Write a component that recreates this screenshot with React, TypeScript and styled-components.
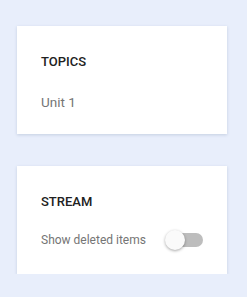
import { useState } from "react";
import styled, { createGlobalStyle } from "styled-components";

const GlobalStyle = createGlobalStyle`
  html, body {
    margin: 0;
    padding: 0;
    background: #e8eefb;
    font-family: Roboto, "Liberation Sans", sans-serif;
  }
`;

export default function App() {
  const [showDeleted, setShowDeleted] = useState(false);

  return (
    <>
      <GlobalStyle />
      <Page>
        <Card>
          <Heading>TOPICS</Heading>
          <Body>Unit 1</Body>
        </Card>
        <Card>
          <Heading>STREAM</Heading>
          <Row>
            <Label>Show deleted items</Label>
            <Switch
              $on={showDeleted}
              onClick={() => setShowDeleted(!showDeleted)}
              aria-pressed={showDeleted}
            >
              <Thumb $on={showDeleted} />
            </Switch>
          </Row>
        </Card>
      </Page>
    </>
  );
}

const Page = styled.div`
  display: flex;
  flex-direction: column;
  gap: 32px;
  padding: 26px 20px 0 17px;
`;

const Card = styled.section`
  width: 210px;
  height: 108px;
  box-sizing: border-box;
  padding: 28px 24px 0;
  background: #fff;
  box-shadow: 0 1px 3px rgba(60, 80, 120, 0.2);
  display: flex;
  flex-direction: column;
`;

const Heading = styled.h2`
  margin: 0;
  font-size: 13px;
  font-weight: 500;
  color: #212121;
`;

const Body = styled.div`
  margin-top: 25px;
  font-size: 13.5px;
  color: #757575;
`;

const Row = styled.div`
  margin-top: 21px;
  height: 20px;
  display: flex;
  align-items: center;
  justify-content: space-between;
`;

const Label = styled.span`
  font-size: 12px;
  color: #757575;
`;

const Switch = styled.button<{ $on: boolean }>`
  position: relative;
  width: 38px;
  height: 20px;
  padding: 0;
  border: none;
  background: transparent;
  cursor: pointer;

  &::before {
    content: "";
    position: absolute;
    left: 4px;
    right: 0;
    top: 3px;
    height: 14px;
    border-radius: 7px;
    background: ${(p) => (p.$on ? "#9fb8ef" : "#bdbdbd")};
  }
`;

const Thumb = styled.span<{ $on: boolean }>`
  position: absolute;
  top: 0;
  left: ${(p) => (p.$on ? "18px" : "0")};
  width: 20px;
  height: 20px;
  border-radius: 50%;
  background: ${(p) => (p.$on ? "#3f6fd8" : "#fafafa")};
  box-shadow: 0 1px 3px rgba(0, 0, 0, 0.35);
`;
